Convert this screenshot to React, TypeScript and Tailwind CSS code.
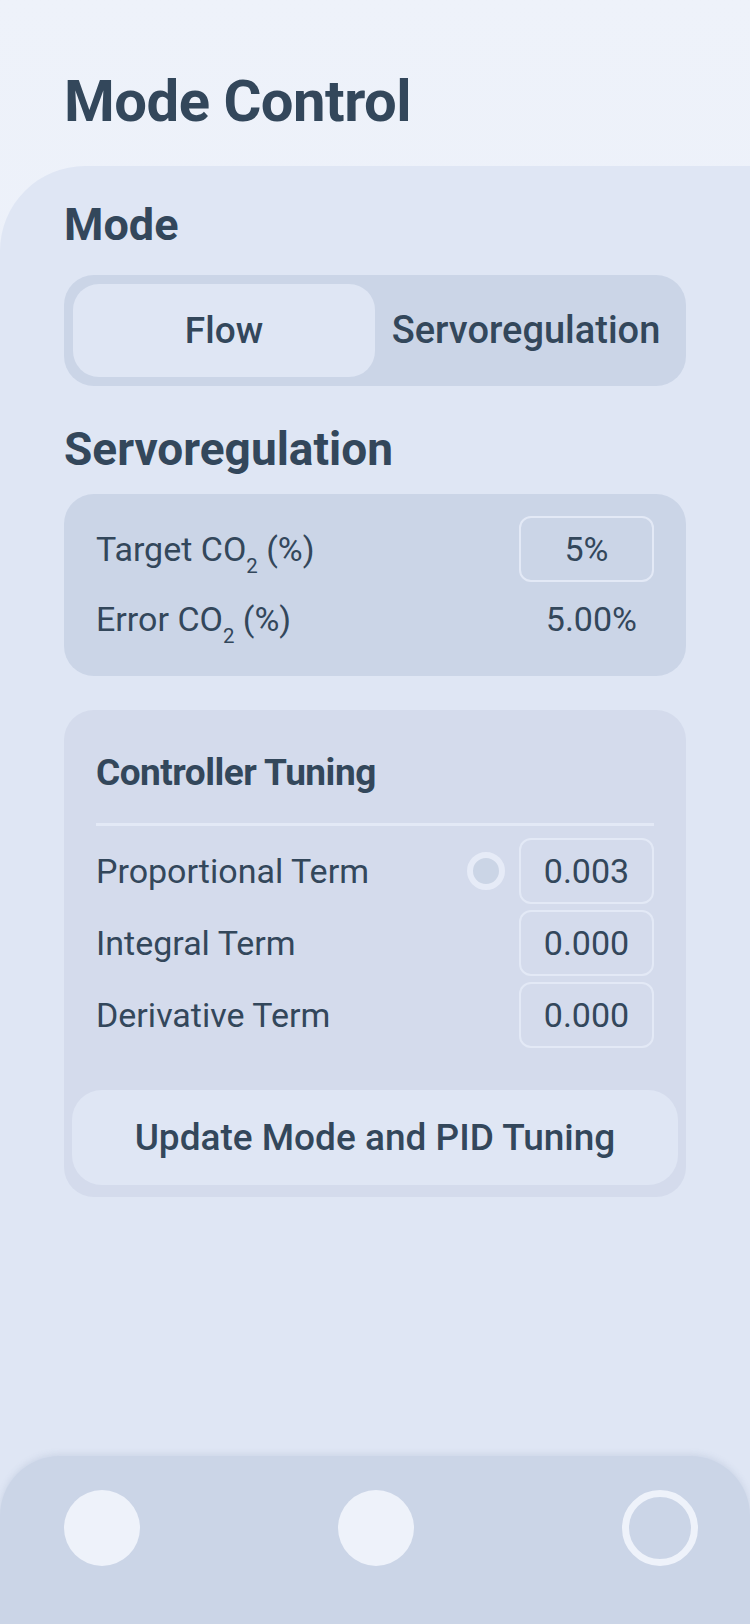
import { useState } from "react";

const font = { fontFamily: "Roboto, 'Noto Sans', sans-serif" };

function Sub2({ label }: { label: string }) {
  return (
    <span>
      {label} CO<sub className="text-[0.6em] align-[-0.35em]">2</sub> (%)
    </span>
  );
}

function NumBox({ value }: { value: string }) {
  return (
    <div className="flex h-[66px] w-[135px] items-center justify-center rounded-[12px] border-2 border-[#e3e9f6] text-[34px]">
      {value}
    </div>
  );
}

export default function App() {
  const [mode, setMode] = useState<"flow" | "servo">("flow");

  return (
    <div
      style={font}
      className="flex min-h-screen w-[750px] flex-col bg-gradient-to-b from-[#eef2fa] to-[#e6ecf7] text-[#33475b]"
    >
      <header className="h-[166px] px-[64px] pt-[72px]">
        <h1 className="text-[58px] font-bold leading-none tracking-[-0.5px]">Mode Control</h1>
      </header>

      <div className="flex flex-1 flex-col rounded-tl-[85px] bg-[#dfe6f4]">
        <main className="px-[64px] pt-[36px]">
          <h2 className="text-[45px] font-bold leading-none">Mode</h2>

          {/* segmented control */}
          <div className="mt-[28px] flex h-[111px] rounded-[30px] bg-[#cbd5e7] p-[9px]">
            <button
              onClick={() => setMode("flow")}
              className={`flex-1 rounded-[26px] text-[37px] font-medium ${mode === "flow" ? "bg-[#dfe6f4]" : ""}`}
            >
              Flow
            </button>
            <button
              onClick={() => setMode("servo")}
              className={`flex-1 rounded-[26px] text-[38px] font-medium ${mode === "servo" ? "bg-[#dfe6f4]" : ""}`}
            >
              Servoregulation
            </button>
          </div>

          <h2 className="mt-[40px] text-[46px] font-bold leading-none">Servoregulation</h2>

          <div className="mt-[22px] rounded-[30px] bg-[#cbd5e7] pb-[31px] pl-[32px] pr-[32px] pt-[22px] text-[34px]">
            <div className="flex items-center justify-between">
              <Sub2 label="Target" />
              <NumBox value="5%" />
            </div>
            <div className="mt-[12px] flex items-center justify-between">
              <Sub2 label="Error" />
              <span className="pr-[17px]">5.00%</span>
            </div>
          </div>

          <div className="mt-[34px] rounded-[30px] bg-[#d4dbec] px-[32px] pb-[12px] pt-[44px]">
            <h3 className="text-[37px] font-bold leading-none tracking-[-0.5px]">Controller Tuning</h3>
            <div className="mt-[32px] h-[3px] bg-[#e3e9f6]" />
            <div className="mt-[12px] flex flex-col gap-[6px] text-[34px]">
              <div className="flex items-center">
                <span className="flex-1">Proportional Term</span>
                <span className="mr-[14px] h-[38px] w-[38px] rounded-full border-[6px] border-[#e6ebf7] bg-[#cbd5e6]" />
                <NumBox value="0.003" />
              </div>
              <div className="flex items-center">
                <span className="flex-1">Integral Term</span>
                <NumBox value="0.000" />
              </div>
              <div className="flex items-center">
                <span className="flex-1">Derivative Term</span>
                <NumBox value="0.000" />
              </div>
            </div>
            <button className="-mx-[24px] mt-[42px] h-[95px] w-[calc(100%+48px)] rounded-[30px] bg-[#dfe6f4] text-[37px] font-medium">
              Update Mode and PID Tuning
            </button>
          </div>
        </main>

        {/* bottom nav */}
        <nav className="mt-auto flex h-[168px] items-start rounded-t-[60px] bg-[#cbd5e7] pl-[64px] pt-[34px] shadow-[0_-2px_6px_rgba(100,120,160,0.15)]">
          <span className="h-[76px] w-[76px] rounded-full bg-[#eef2fa]" />
          <span className="ml-[198px] h-[76px] w-[76px] rounded-full bg-[#eef2fa]" />
          <span className="ml-[208px] h-[76px] w-[76px] rounded-full border-[7px] border-[#eef2fa]" />
        </nav>
      </div>
    </div>
  );
}
